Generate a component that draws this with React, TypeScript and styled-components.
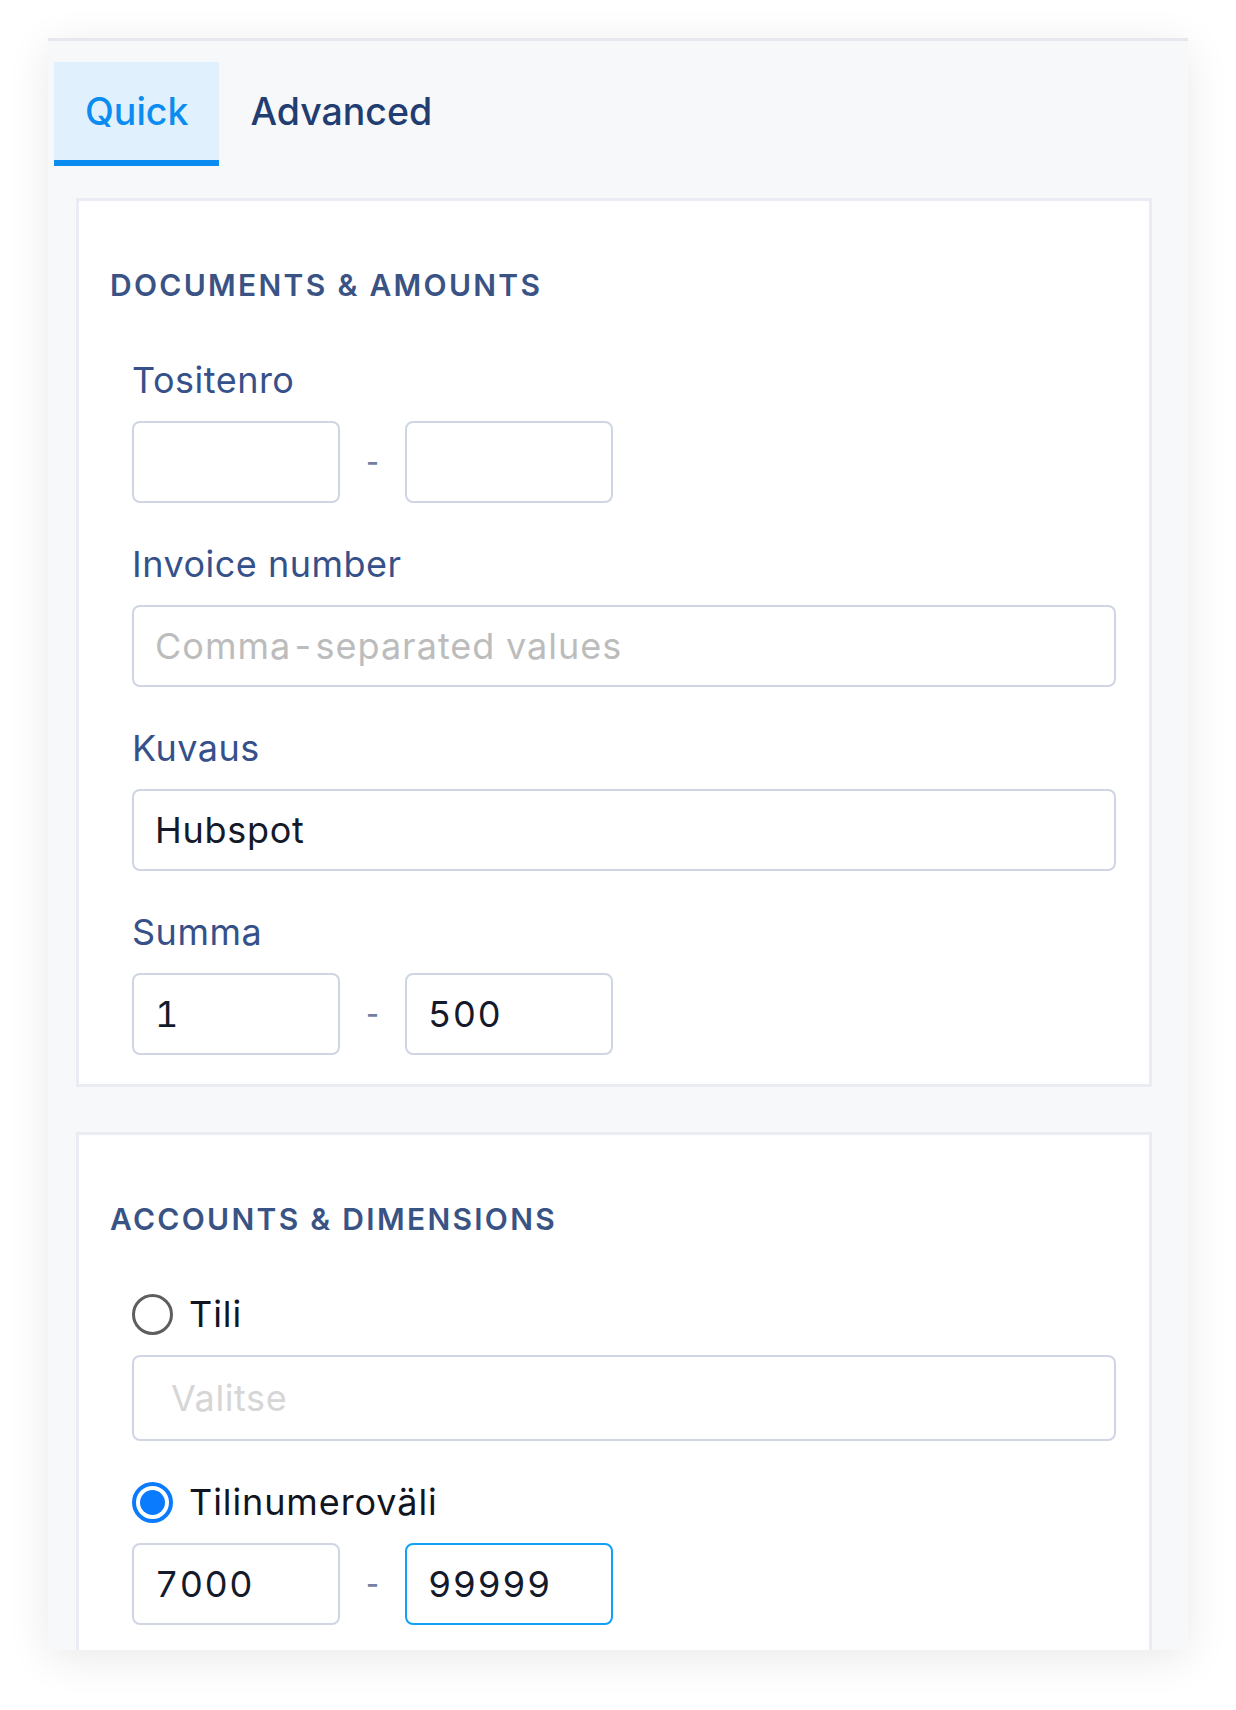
import React from "react";
import styled, { createGlobalStyle, css } from "styled-components";

const GlobalStyle = createGlobalStyle`
  * { box-sizing: border-box; }
  html, body { margin: 0; padding: 0; background: #ffffff; }
  body { font-family: Inter, "Noto Sans", "Liberation Sans", sans-serif; }
`;

const Page = styled.div`
  width: 1236px;
  height: 1710px;
  padding: 38px 48px 0 48px;
  background: #ffffff;
  overflow: hidden;
`;

const Panel = styled.div`
  height: 1612px;
  background: #f7f8fa;
  border-top: 3px solid #e6e7ef;
  box-shadow: 0 8px 40px rgba(0, 0, 0, 0.09);
  overflow: hidden;
`;

const TabBar = styled.div`
  display: flex;
  padding: 21px 0 0 6px;
`;

const Tab = styled.div<{ $active?: boolean }>`
  height: 104px;
  padding: 0 31px;
  display: flex;
  align-items: center;
  font-size: 37.5px;
  font-weight: 500;
  color: #213d72;
  border-bottom: 6px solid transparent;
  ${(p) =>
    p.$active &&
    css`
      background: #e0f1fd;
      color: #0a8cf0;
      border-bottom-color: #0a8cf0;
    `}
`;

const Body = styled.div`
  display: flex;
  flex-direction: column;
  gap: 45px;
  padding: 32px 36px 0 28px;
`;

const Card = styled.section`
  background: #ffffff;
  border: 3px solid #ebecf3;
  padding: 64px 33px 29px 31px;
`;

const SectionTitle = styled.h2`
  margin: 0 0 53px 0;
  font-size: 30px;
  line-height: 40px;
  font-weight: 600;
  letter-spacing: 2.3px;
  color: #3a5385;
  text-transform: uppercase;
`;

const Fields = styled.div`
  display: flex;
  flex-direction: column;
  gap: 39px;
  margin-left: 22px;
`;

const Field = styled.div`
  display: flex;
  flex-direction: column;
  gap: 19px;
`;

const Label = styled.label`
  font-size: 36px;
  line-height: 44px;
  font-weight: 400;
  letter-spacing: 0.5px;
  color: #36518a;
`;

const RangeRow = styled.div`
  display: flex;
  align-items: center;
`;

const Dash = styled.span`
  width: 65px;
  text-align: center;
  font-size: 28px;
  font-weight: 500;
  line-height: 1;
  color: #71819f;
`;

const TextInput = styled.input<{ $short?: boolean; $focused?: boolean }>`
  display: block;
  width: ${(p) => (p.$short ? "208px" : "100%")};
  height: 82px;
  margin: 0;
  padding: 0 21px;
  border: 2px solid ${(p) => (p.$focused ? "#12a0f6" : "#cfd5e3")};
  border-radius: 8px;
  background: #ffffff;
  font-family: Inter, "Noto Sans", "Liberation Sans", sans-serif;
  font-size: 36px;
  letter-spacing: ${(p) => (p.$short ? "1.4px" : "0.7px")};
  font-variant-numeric: tabular-nums;
  color: #141a2a;
  outline: none;
  &::placeholder {
    color: #bcbcbc;
    letter-spacing: 1px;
  }
`;

const SelectBox = styled.div`
  height: 86px;
  display: flex;
  align-items: center;
  padding: 0 37px;
  border: 2px solid #cfd5e3;
  border-radius: 8px;
  background: #ffffff;
`;

const SelectPlaceholder = styled.span`
  font-size: 36px;
  letter-spacing: 0.6px;
  color: #d6d6d6;
`;

const RadioRow = styled.div`
  display: flex;
  align-items: center;
  gap: 16px;
  height: 44px;
`;

const Radio = styled.span<{ $checked?: boolean }>`
  position: relative;
  flex: none;
  width: 41px;
  height: 41px;
  border-radius: 50%;
  background: #ffffff;
  border: ${(p) => (p.$checked ? "4px solid #0b7bfd" : "3px solid #5e5e5e")};
  ${(p) =>
    p.$checked &&
    css`
      &::after {
        content: "";
        position: absolute;
        inset: 4px;
        border-radius: 50%;
        background: #0b7bfd;
      }
    `}
`;

const RadioText = styled.span`
  font-size: 36px;
  line-height: 44px;
  letter-spacing: 0.9px;
  color: #12151f;
`;

const Range = ({ from, to, focusTo }: { from?: string; to?: string; focusTo?: boolean }) => (
  <RangeRow>
    <TextInput $short readOnly value={from ?? ""} />
    <Dash>-</Dash>
    <TextInput $short $focused={focusTo} readOnly value={to ?? ""} />
  </RangeRow>
);

export default function App() {
  return (
    <>
      <GlobalStyle />
      <Page>
        <Panel>
          <TabBar>
            <Tab $active>Quick</Tab>
            <Tab>Advanced</Tab>
          </TabBar>
          <Body>
            <Card>
              <SectionTitle>Documents &amp; Amounts</SectionTitle>
              <Fields>
                <Field>
                  <Label>Tositenro</Label>
                  <Range />
                </Field>
                <Field>
                  <Label>Invoice number</Label>
                  <TextInput readOnly placeholder="Comma-separated values" value="" />
                </Field>
                <Field>
                  <Label>Kuvaus</Label>
                  <TextInput readOnly value="Hubspot" />
                </Field>
                <Field>
                  <Label>Summa</Label>
                  <Range from="1" to="500" />
                </Field>
              </Fields>
            </Card>
            <Card>
              <SectionTitle>Accounts &amp; Dimensions</SectionTitle>
              <Fields>
                <Field>
                  <RadioRow>
                    <Radio />
                    <RadioText>Tili</RadioText>
                  </RadioRow>
                  <SelectBox>
                    <SelectPlaceholder>Valitse</SelectPlaceholder>
                  </SelectBox>
                </Field>
                <Field>
                  <RadioRow>
                    <Radio $checked />
                    <RadioText>Tilinumeroväli</RadioText>
                  </RadioRow>
                  <Range from="7000" to="99999" focusTo />
                </Field>
              </Fields>
            </Card>
          </Body>
        </Panel>
      </Page>
    </>
  );
}
